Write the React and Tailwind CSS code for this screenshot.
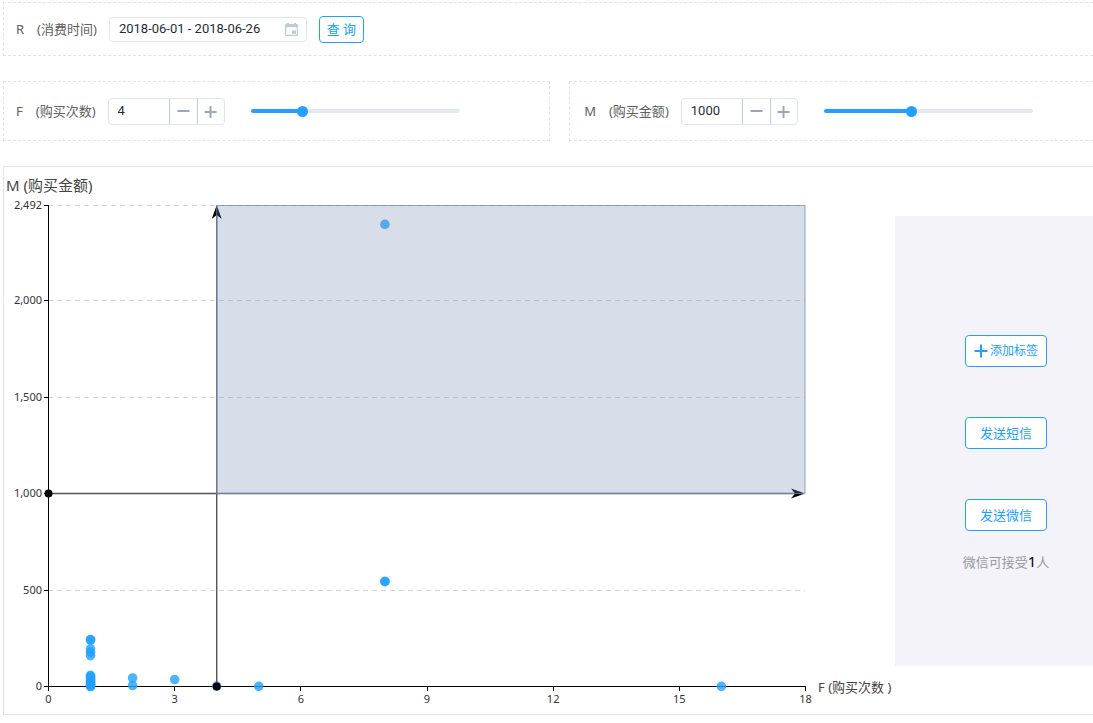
import React, { useState } from "react";

const MAX_F = 16;
const MAX_M = 2392;

// [F, M]
const customers = [
  [1, 243], [1, 241], [1, 195], [1, 178], [1, 160],
  [1, 58], [1, 52], [1, 44], [1, 36], [1, 30], [1, 24], [1, 18], [1, 12], [1, 6], [1, 2], [1, 0],
  [2, 44], [2, 5], [3, 36], [4, 2], [5, 1],
  [8, 2394], [8, 545], [8, 543], [16, 1],
];

const xTicks = [0, 3, 6, 9, 12, 15, 18];
const yTicks = [0, 500, 1000, 1500, 2000, 2492];

const left = 44;
const right = 801;
const top = 38;
const bottom = 519;

const toX = (f) => left + (f / 18) * (right - left);
const toY = (m) => bottom - (m / 2492) * (bottom - top);
const crisp = (n) => Math.ceil(n) + 0.5;

const Stepper = ({ id, value, step, max, onChange }) => {
  const clamp = (n) => Math.min(max, Math.max(0, n));
  return (
    <div className="flex h-[27px] w-[117px] shrink-0 overflow-hidden rounded border border-[#e2e5e9] bg-white">
      <input
        id={id}
        type="text"
        inputMode="numeric"
        value={value}
        onChange={(e) => onChange(clamp(Number(e.target.value) || 0))}
        className="min-w-0 flex-1 pl-[9px] font-[Roboto,sans-serif] text-[13px] text-[#1f2d3d] outline-none"
      />
      <button
        type="button"
        aria-label="减少"
        onClick={() => onChange(clamp(value - step))}
        className="flex w-7 items-center justify-center border-l border-[#bfcbd9] text-[#97a8be]"
      >
        <svg width="13" height="13" viewBox="0 0 13 13" fill="none" stroke="currentColor" strokeWidth="2">
          <path d="M0.5 6H12.5" />
        </svg>
      </button>
      <button
        type="button"
        aria-label="增加"
        onClick={() => onChange(clamp(value + step))}
        className="flex w-[27px] items-center justify-center border-l border-[#bfcbd9] text-[#97a8be]"
      >
        <svg width="13" height="13" viewBox="0 0 13 13" fill="none" stroke="currentColor" strokeWidth="2">
          <path d="M0.5 7H12.5M6.5 1V13" />
        </svg>
      </button>
    </div>
  );
};

const Slider = ({ label, value, max, onChange }) => (
  <div className="relative h-1 w-[209px] rounded-full bg-[#e4e8f1]">
    <div className="h-1 rounded-full bg-[#20a0ff]" style={{ width: `${(value / max) * 100}%` }} />
    <input
      type="range"
      aria-label={label}
      min="0"
      max={max}
      value={value}
      onChange={(e) => onChange(Number(e.target.value))}
      className="absolute -inset-x-1.5 -top-1 h-3 w-[221px] cursor-pointer appearance-none bg-transparent outline-none [&::-webkit-slider-thumb]:size-[11px] [&::-webkit-slider-thumb]:appearance-none [&::-webkit-slider-thumb]:rounded-full [&::-webkit-slider-thumb]:bg-[#20a0ff]"
    />
  </div>
);

const FilterBox = ({ id, name, note, value, step, max, onChange, className }) => (
  <section className={`flex h-[60px] items-center border border-dashed border-[#e3e3e3] ${className}`}>
    <label htmlFor={id} className="mr-3 flex gap-[13px] whitespace-nowrap">
      <span>{name}</span>
      <span>({note})</span>
    </label>
    <Stepper id={id} value={value} step={step} max={max} onChange={onChange} />
    <div className="ml-[26px]">
      <Slider label={note} value={value} max={max} onChange={onChange} />
    </div>
  </section>
);

const ScatterChart = ({ f, m }) => {
  const fx = toX(f) + 0.5;
  const my = toY(m) + 0.5;

  return (
    <svg viewBox="0 0 891 547" className="block h-auto w-full" fontFamily="'Noto Sans', 'Noto Sans CJK SC', sans-serif">
      <text x="2" y="24" fontSize="15" fill="#444">M (购买金额)</text>
      <text x="814" y="525" fontSize="13" fill="#444">F (购买次数 )</text>

      {yTicks.map((t) => (
        <g key={t}>
          {t > 0 && (
            <path d={`M${left} ${crisp(toY(t))}H${right}`} stroke="#d4d4d4" strokeDasharray="5 4" />
          )}
          <path d={`M${left - 4} ${crisp(toY(t))}H${left}`} stroke="#000" />
          <text x={left - 6} y={Math.ceil(toY(t)) + 4} fontSize="11" fill="#333" textAnchor="end">
            {t.toLocaleString("en-US")}
          </text>
        </g>
      ))}
      {xTicks.map((t) => (
        <g key={t}>
          <path d={`M${Math.round(toX(t)) + 0.5} ${bottom}v5`} stroke="#000" />
          <text x={toX(t) + 0.5} y={bottom + 17} fontSize="11" fill="#333" textAnchor="middle">{t}</text>
        </g>
      ))}
      <path d={`M${left + 0.5} ${top}V${bottom + 0.5}H${right + 1}`} fill="none" stroke="#000" />

      {customers.map(([cf, cm], i) => (
        <circle key={i} cx={toX(cf) + 0.5} cy={toY(cm) + 0.5} r="4.8" fill="#20a0ff" fillOpacity="0.8" />
      ))}

      {/* threshold lines */}
      <g fill="#000">
        <path d={`M${fx} ${bottom}V${top + 6}M${left} ${my}H${right - 6}`} stroke="#555" strokeWidth="1.4" />
        <circle cx={fx} cy={bottom + 0.5} r="4" />
        <circle cx={left + 0.5} cy={my} r="4" />
        <path d={`M${fx} ${top}l5 14l-5 -4l-5 4z`} />
        <path d={`M${right} ${my}l-14 -5l4 5l-4 5z`} />
      </g>

      <rect
        x={fx}
        y={top + 0.5}
        width={right - fx}
        height={my - top - 0.5}
        fill="rgb(120,140,180)"
        fillOpacity="0.29"
        stroke="rgb(120,140,180)"
        strokeOpacity="0.8"
      />
    </svg>
  );
};

const ActionButton = ({ children }) => (
  <button
    type="button"
    className="flex h-8 w-[82px] items-center justify-center gap-0.5 whitespace-nowrap rounded border border-[#20a0ff] bg-white text-[13px] text-[#20a0ff]"
  >
    {children}
  </button>
);

const App = () => {
  const [dateRange, setDateRange] = useState("2018-06-01 - 2018-06-26");
  const [f, setF] = useState(4);
  const [m, setM] = useState(1000);

  return (
    <main className="bg-white pt-0.5 pb-2 pl-[3px] font-['Noto_Sans','Noto_Sans_CJK_SC',sans-serif] text-[13px] leading-5 text-[#606060]">
      <section className="flex h-[54px] items-center border border-r-0 border-dashed border-[#e3e3e3] pl-3">
        <label htmlFor="range" className="mr-3 flex gap-[13px] whitespace-nowrap">
          <span>R</span>
          <span>(消费时间)</span>
        </label>
        <div className="flex h-[25px] w-[198px] items-center rounded border border-[#e2e5e9] pr-2">
          <input
            id="range"
            type="text"
            value={dateRange}
            onChange={(e) => setDateRange(e.target.value)}
            className="min-w-0 flex-1 pl-[9px] font-[Roboto,sans-serif] text-[13px] text-[#1f2d3d] outline-none"
          />
          <svg width="13" height="13" viewBox="0 0 13 13" fill="#bfcbd9">
            <path fillRule="evenodd" d="M1 1h1V0h2v1h5V0h2v1h1a1 1 0 0 1 1 1v10a1 1 0 0 1-1 1H1a1 1 0 0 1-1-1V2a1 1 0 0 1 1-1zM1.3 4.3v7.4h10.4V4.3zM7 7.5h4V11H7z" />
          </svg>
        </div>
        <button
          type="button"
          className="ml-3 h-[27px] w-[45px] rounded border border-[#20a0ff] bg-white text-[13px] text-[#20a0ff]"
        >
          查 询
        </button>
      </section>

      <div className="mt-[25px] flex gap-[19px]">
        <FilterBox id="f" name="F" note="购买次数" value={f} step={1} max={MAX_F} onChange={setF} className="flex-[548] pl-3" />
        <FilterBox id="m" name="M" note="购买金额" value={m} step={100} max={MAX_M} onChange={setM} className="flex-[523] border-r-0 pl-3.5" />
      </div>

      <section className="mt-[25px] flex items-center border border-r-0 border-[#e3e3e3]">
        <div className="min-w-0 flex-1">
          <ScatterChart f={f} m={m} />
        </div>
        <aside className="flex h-[450px] w-[198px] shrink-0 flex-col items-center gap-[50px] bg-[#f3f3f9] pt-[119px] pl-6">
          <ActionButton>
            <svg width="14" height="14" viewBox="0 0 14 14" fill="none" stroke="currentColor" strokeWidth="2">
              <path d="M0.5 7H13.5M7 0.5V13.5" />
            </svg>
            <span className="text-xs">添加标签</span>
          </ActionButton>
          <ActionButton>发送短信</ActionButton>
          <div className="flex flex-col items-center gap-5">
            <ActionButton>发送微信</ActionButton>
            <p className="whitespace-nowrap text-[#999]">
              微信可接受<span className="text-[15px] text-black">1</span>人
            </p>
          </div>
        </aside>
      </section>
    </main>
  );
};

export default App;
